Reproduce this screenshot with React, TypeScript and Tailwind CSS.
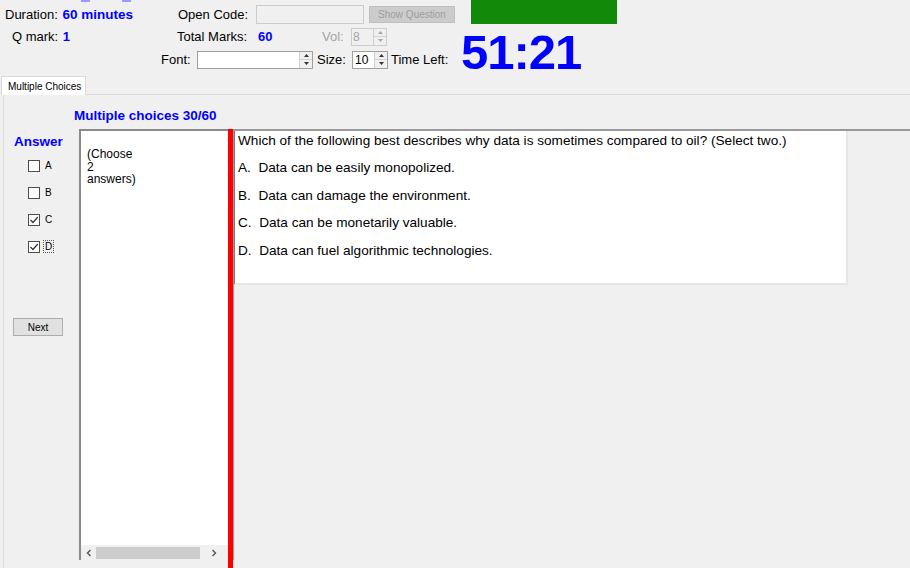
import React from 'react';

function Arrows({ disabled }: { disabled?: boolean }) {
    const fill = disabled ? '#a8a8a8' : '#333333';
    return (
        <div className="flex w-[13px] flex-col border-l border-[#d0d0d0]">
            <div className="flex flex-1 items-center justify-center border-b border-[#d0d0d0] bg-[#f0f0f0]">
                <svg width="5" height="3" viewBox="0 0 5 3"><path d="M0 3 L2.5 0 L5 3 Z" fill={fill} /></svg>
            </div>
            <div className="flex flex-1 items-center justify-center bg-[#f0f0f0]">
                <svg width="5" height="3" viewBox="0 0 5 3"><path d="M0 0 L2.5 3 L5 0 Z" fill={fill} /></svg>
            </div>
        </div>
    );
}

function Check({ label, checked, focus }: { label: string; checked?: boolean; focus?: boolean }) {
    return (
        <div className="flex h-[27px] items-center pl-[24px]">
            <div className="flex h-[12px] w-[12px] items-center justify-center border border-[#4d4d4d] bg-white">
                {checked && (
                    <svg width="10" height="10" viewBox="0 0 10 10">
                        <path d="M1.5 5 L4 7.5 L8.8 2" fill="none" stroke="#333333" strokeWidth="1.2" />
                    </svg>
                )}
            </div>
            <span
                className={
                    focus
                        ? 'ml-[3px] border border-dotted border-[#555555] px-[1px] text-[10px] leading-[11px]'
                        : 'ml-[5px] text-[10px] leading-[11px]'
                }
            >
                {label}
            </span>
        </div>
    );
}

export default function App() {
    return (
        <div className="h-[568px] w-[910px] overflow-hidden bg-[#f0f0f0] font-['Liberation_Sans',Arial,sans-serif] text-[13px] text-black">
            {/* header */}
            <div className="flex h-[76px] flex-col">
                <div className="flex h-[2px]">
                    <span className="ml-[81px] h-[2px] w-[9px] bg-[#9a9aff]" />
                    <span className="ml-[32px] h-[2px] w-[9px] bg-[#9a9aff]" />
                </div>
                <div className="flex h-[23px]">
                    <div className="w-[178px] pl-[5px] pt-[5px] leading-[15px]">
                        Duration: <span className="ml-[1px] font-bold text-[13.5px] text-[#0000ff]">60 minutes</span>
                    </div>
                    <div className="w-[78px] pt-[5px] leading-[15px]">Open Code:</div>
                    <div className="mt-[3px] h-[19px] w-[108px] border border-[#cccccc] bg-[#f0f0f0]" />
                    <div className="ml-[5px] mt-[4px] flex h-[17px] w-[86px] items-center justify-center border border-[#bfbfbf] bg-[#cccccc] text-[10px] text-[#9d9d9d]">
                        Show Question
                    </div>
                    <div className="ml-[16px] -mt-[2px] h-[24px] w-[146px] bg-[#108a08]" />
                </div>
                <div className="flex h-[51px]">
                    <div className="flex w-[461px] flex-col">
                        <div className="flex h-[23px] items-center">
                            <div className="w-[177px] pl-[12px]">
                                Q mark: <span className="ml-[1px] font-bold text-[#0000ff]">1</span>
                            </div>
                            <div className="w-[81px]">Total Marks:</div>
                            <div className="w-[64px] font-bold text-[#0000ff]">60</div>
                            <div className="w-[29px] text-[#a3a3a3]">Vol:</div>
                            <div className="flex h-[18px] w-[36px] border border-[#cccccc] bg-[#f0f0f0]">
                                <div className="flex-1 pl-[1px] text-[12px] leading-[16px] text-[#a3a3a3]">8</div>
                                <Arrows disabled />
                            </div>
                        </div>
                        <div className="flex h-[23px] items-center">
                            <div className="w-[197px] pl-[161px]">Font:</div>
                            <div className="flex h-[18px] w-[116px] border border-[#a0a0a0] bg-white">
                                <div className="flex-1" />
                                <Arrows />
                            </div>
                            <div className="w-[39px] pl-[4px]">Size:</div>
                            <div className="flex h-[18px] w-[36px] border border-[#a0a0a0] bg-white">
                                <div className="flex-1 pl-[2px] text-[12px] leading-[16px]">10</div>
                                <Arrows />
                            </div>
                            <div className="pl-[3px]">Time Left:</div>
                        </div>
                    </div>
                    <div className="mt-[3px] text-[49px] font-bold leading-[48px] tracking-[-1px] text-[#0000ff]">51:21</div>
                </div>
            </div>

            {/* tab strip */}
            <div className="flex h-[19px]">
                <div className="ml-[1px] flex w-[85px] items-center border border-b-0 border-[#d9d9d9] bg-white pl-[6px] text-[10px]">
                    Multiple Choices
                </div>
                <div className="flex-1 border-b border-[#d9d9d9]" />
            </div>

            {/* tab panel */}
            <div className="ml-[3px] flex h-[473px] flex-col border-l border-[#dcdcdc]">
                <div className="h-[34px] pl-[70px] pt-[13px] text-[13.5px] font-bold leading-[16px] text-[#0000ff]">
                    Multiple choices 30/60
                </div>
                <div className="flex flex-1">
                    <div className="w-[75px] pt-[5px]">
                        <div className="pl-[10px] text-[13.5px] font-bold leading-[16px] text-[#0000ff]">Answer</div>
                        <div className="mt-[2px]">
                            <Check label="A" />
                            <Check label="B" />
                            <Check label="C" checked />
                            <Check label="D" checked focus />
                        </div>
                        <div className="ml-[9px] mt-[58px] flex h-[18px] w-[50px] items-center justify-center border border-[#adadad] bg-[#e1e1e1] text-[10px]">
                            Next
                        </div>
                    </div>

                    <div className="flex h-[431px] w-[149px] flex-col border-l-2 border-t-2 border-[#8a8a8a] bg-white">
                        <div className="flex-1 pl-[6px] pt-[17px] text-[12px] leading-[12.5px]">
                            (Choose
                            <br />2
                            <br />answers)
                        </div>
                        <div className="flex h-[15px] items-center bg-[#f0f0f0]">
                            <div className="flex w-[15px] items-center justify-center">
                                <svg width="6" height="8" viewBox="0 0 6 8"><path d="M4.5 1 L1.5 4 L4.5 7" fill="none" stroke="#555555" strokeWidth="1.4" /></svg>
                            </div>
                            <div className="h-[12px] w-[104px] bg-[#cdcdcd]" />
                            <div className="flex flex-1 items-center justify-center">
                                <svg width="6" height="8" viewBox="0 0 6 8"><path d="M1.5 1 L4.5 4 L1.5 7" fill="none" stroke="#555555" strokeWidth="1.4" /></svg>
                            </div>
                        </div>
                    </div>

                    <div className="w-[5px] bg-[#ff0000]" />

                    <div className="h-[431px] flex-1 border-l border-t-2 border-[#9a9a9a]">
                        <div className="h-[154px] w-[614px] border-b-2 border-l border-r-2 border-b-[#e6e6e6] border-l-[#7a7a7a] border-r-[#e6e6e6] bg-white pl-[3px] pt-[2px] text-[13.6px] leading-[15px]">
                            <div>Which of the following best describes why data is sometimes compared to oil? (Select two.)</div>
                            <div className="mt-[12px] whitespace-pre">A.  Data can be easily monopolized.</div>
                            <div className="mt-[13px] whitespace-pre">B.  Data can damage the environment.</div>
                            <div className="mt-[12px] whitespace-pre">C.  Data can be monetarily valuable.</div>
                            <div className="mt-[13px] whitespace-pre">D.  Data can fuel algorithmic technologies.</div>
                        </div>
                    </div>
                </div>
            </div>
        </div>
    );
}
